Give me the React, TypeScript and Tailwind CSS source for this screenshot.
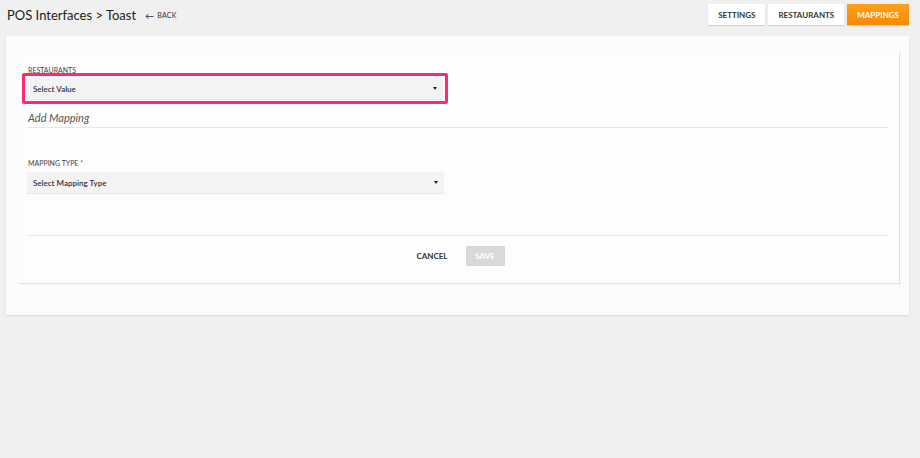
import React from 'react';

function Caret() {
  return <span className="w-0 h-0 border-l-[2px] border-r-[2px] border-t-[3px] border-l-transparent border-r-transparent border-t-[#222]" />;
}

function SelectBox({ placeholder }: { placeholder: string }) {
  return (
    <div className="flex items-center justify-between h-[21px] bg-[#f3f3f3] shadow-[0_1px_1px_rgba(0,0,0,0.08)] pl-[6px] pr-[6px]">
      <span className="text-[8px] font-semibold text-[#333]">{placeholder}</span>
      <Caret />
    </div>
  );
}

export default function App() {
  const tabs = [
    { label: 'SETTINGS', active: false },
    { label: 'RESTAURANTS', active: false },
    { label: 'MAPPINGS', active: true },
  ];

  return (
    <div className="w-[920px] h-[458px] bg-[#f0f0f0] font-['Lato',sans-serif] overflow-hidden">
      {/* header */}
      <div className="flex items-start justify-between pl-[7px] pr-[11px] pt-[4px] h-[32px]">
        <div className="flex items-center gap-[9px] pt-[1px]">
          <h1 className="text-[13px] text-[#222] leading-[20px]">POS Interfaces &gt; Toast</h1>
          <span className="flex items-center gap-[3px] text-[7px] text-[#333] tracking-[0.2px]">
            <span className="text-[9px] leading-none">←</span>BACK
          </span>
        </div>
        <div className="flex gap-[3px]">
          {tabs.map((t) => (
            <div
              key={t.label}
              className={
                t.active
                  ? 'h-[21px] px-[10px] flex items-center text-[8px] font-bold text-white bg-gradient-to-b from-[#ffa01a] to-[#f88a00] shadow-[0_1px_1px_rgba(0,0,0,0.15)]'
                  : 'h-[21px] px-[10px] flex items-center text-[8px] font-bold text-[#333] bg-white shadow-[0_1px_1px_rgba(0,0,0,0.12)]'
              }
            >
              {t.label}
            </div>
          ))}
        </div>
      </div>

      {/* outer card */}
      <div className="ml-[6px] mt-[4px] w-[903px] h-[279px] bg-[#fcfcfc] shadow-[0_1px_2px_rgba(0,0,0,0.1)] pt-[16px] pl-[12px]">
        <div className="w-[881px] h-[231px] bg-[#fdfdfd] shadow-[1px_1px_1px_rgba(0,0,0,0.1)] pl-[9px] pr-[11px] pt-[14px]">
          <div className="text-[7px] text-[#444] leading-[9px] pl-[1px]">RESTAURANTS</div>
          <div className="w-[426px] -ml-[5px] -mt-[2px] border-[3px] border-[#ff2a6d] rounded-[2px] p-[2px]">
            <SelectBox placeholder="Select Value" />
          </div>
          <div className="mt-[5px] border-b border-[#e6e6e6] pb-[3px] leading-[13px]">
            <span className="text-[11px] italic text-[#555] pl-[1px] leading-[13px]">Add Mapping</span>
          </div>

          <div className="mt-[31px] text-[7px] text-[#444] leading-[9px] pl-[1px]">
            MAPPING TYPE <span className="text-[#e22]">*</span>
          </div>
          <div className="w-[417px] mt-[4px]">
            <SelectBox placeholder="Select Mapping Type" />
          </div>

          <div className="mt-[42px] border-t border-[#e6e6e6] flex justify-center items-center gap-[18px] pt-[10px] pl-[6px]">
            <span className="text-[8px] font-bold text-[#333]">CANCEL</span>
            <div className="w-[39px] h-[20px] bg-[#d9d9d9] flex items-center justify-center text-[8px] font-bold text-white rounded-[1px]">
              SAVE
            </div>
          </div>
        </div>
      </div>
    </div>
  );
}
